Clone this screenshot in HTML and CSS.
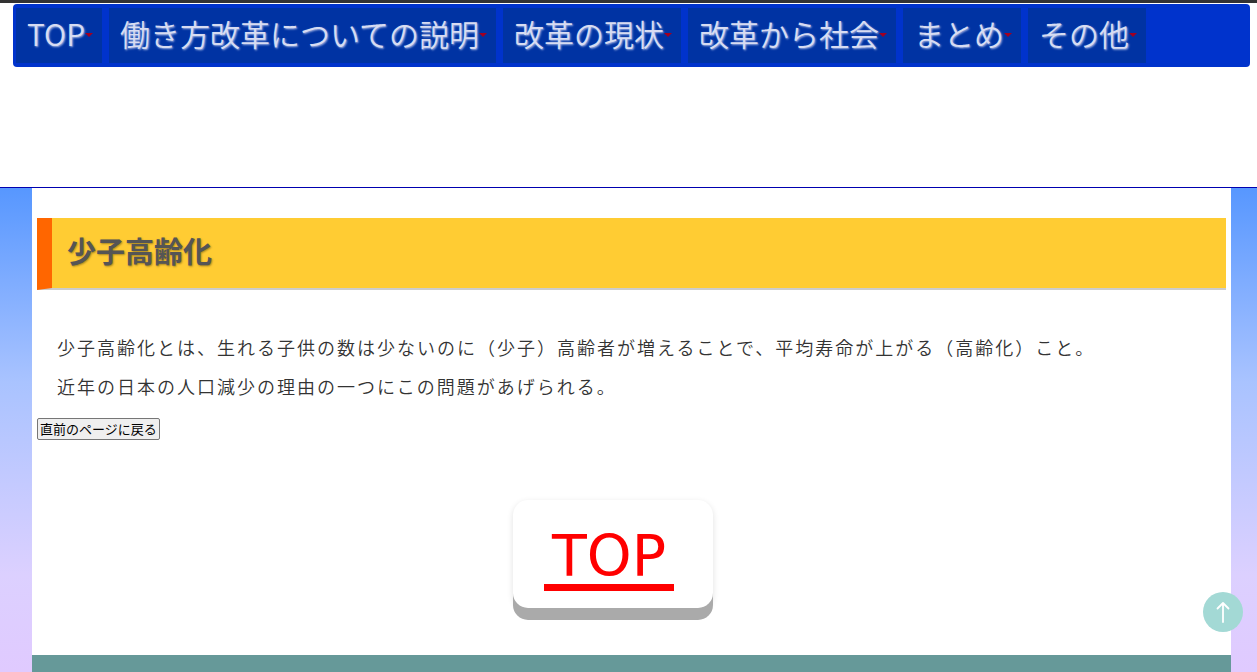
FILE: index.html
```html
<!DOCTYPE html>
<html lang="ja">
<head>
<meta charset="utf-8">
<title>少子高齢化</title>
<link rel="stylesheet" href="styles.css">
</head>
<body>
<header class="site-header">
  <nav class="gnav">
    <a class="gnav-item" href="#">TOP<span class="caret"></span></a>
    <a class="gnav-item" href="#">働き方改革についての説明<span class="caret"></span></a>
    <a class="gnav-item" href="#">改革の現状<span class="caret"></span></a>
    <a class="gnav-item" href="#">改革から社会<span class="caret"></span></a>
    <a class="gnav-item" href="#">まとめ<span class="caret"></span></a>
    <a class="gnav-item" href="#">その他<span class="caret"></span></a>
  </nav>
</header>
<div class="page">
  <main class="main">
    <h1 class="title">少子高齢化</h1>
    <div class="body-text">
      <p>少子高齢化とは、生れる子供の数は少ないのに（少子）高齢者が増えることで、平均寿命が上がる（高齢化）こと。</p>
      <p>近年の日本の人口減少の理由の一つにこの問題があげられる。</p>
    </div>
    <button class="back-btn" type="button">直前のページに戻る</button>
    <div class="top-wrap">
      <a class="top-card" href="#"><span class="top-link">TOP</span></a>
    </div>
  </main>
  <footer class="footer"></footer>
</div>
<a class="to-top" href="#" aria-label="ページ上部へ">
  <svg width="14" height="22" viewBox="0 0 14 22"><path d="M7 21V2M1.5 7.5L7 2l5.5 5.5" fill="none" stroke="#fff" stroke-width="1.8" stroke-linecap="round" stroke-linejoin="round"/></svg>
</a>
</body>
</html>
```

FILE: styles.css
```css
html, body {
  margin: 0;
  padding: 0;
}
body {
  font-family: "Noto Sans CJK JP", "Noto Sans", sans-serif;
  background: #fff;
  height: 672px;
  overflow: hidden;
}
.site-header {
  background: #fff;
  border-top: 3px solid #333;
  border-bottom: 1px solid #0000b0;
  height: 183px;
  padding: 1px 7px 0 13px;
  box-sizing: content-box;
}
.gnav {
  display: flex;
  gap: 7px;
  background: #0033cc;
  border-radius: 4px;
  padding: 4px 3px;
  height: 55px;
}
.gnav-item {
  display: flex;
  align-items: center;
  box-sizing: border-box;
  height: 55px;
  padding: 0 9px 5px 11px;
  background: #0033a3;
  color: #d7dcf2;
  text-decoration: none;
  font-size: 30px;
  font-weight: 350;
  line-height: 43px;
  text-shadow: 1px 1px 2px rgba(230, 235, 255, 0.7);
}
.caret {
  display: inline-block;
  width: 0;
  height: 0;
  border-left: 4px solid transparent;
  border-right: 4px solid transparent;
  border-top: 4px solid #a00022;
  margin-left: 0;
  margin-top: 4px;
}
.page {
  background: linear-gradient(to bottom, #5797ff 0%, #a9c3ff 40%, #dcd0ff 80%, #e0caff 100%);
  padding: 0 26px 0 32px;
  height: 484px;
  display: flex;
  flex-direction: column;
}
.main {
  background: #fff;
  flex: 1;
  padding: 30px 5px 0;
}
.title {
  margin: 0;
  box-sizing: border-box;
  padding: 0 0 6px 15px;
  background: #ffcc33;
  border-left: 15px solid #ff6600;
  border-bottom: 2px solid #cccccc;
  height: 72px;
  display: flex;
  align-items: center;
  font-size: 29px;
  font-weight: bold;
  color: #555;
  text-shadow: 1px 1px 2px rgba(0, 0, 0, 0.35);
}
.body-text {
  padding: 38px 0 0 20px;
}
.body-text p {
  margin: 0;
  font-size: 18px;
  font-weight: 350;
  letter-spacing: 2px;
  line-height: 39px;
  color: #333;
}
.back-btn {
  display: block;
  margin-top: 12px;
  height: 22px;
  padding: 0 2px;
  font-family: "Noto Sans CJK JP", sans-serif;
  font-size: 13px;
  line-height: 16px;
  color: #000;
  background: #efefef;
  border: 1px solid #767676;
  border-radius: 2px;
}
.top-wrap {
  padding: 60px 0 0 476px;
}
.top-card {
  display: flex;
  justify-content: center;
  align-items: flex-start;
  width: 200px;
  height: 108px;
  background: #fff;
  border-radius: 15px;
  box-shadow: 0 12px 0 #aaaaaa, 0 2px 6px rgba(0, 0, 0, 0.12);
  text-decoration: none;
}
.top-link {
  display: inline-block;
  margin-top: 29px;
  margin-left: -8px;
  padding: 0 8px 0 8px;
  font-family: "DejaVu Sans", sans-serif;
  font-size: 57px;
  line-height: 55px;
  color: #ff0000;
  border-bottom: 7px solid #ff0000;
}
.footer {
  height: 17px;
  background: #669999;
}
.to-top {
  position: fixed;
  right: 14px;
  bottom: 40px;
  width: 40px;
  height: 40px;
  border-radius: 50%;
  background: #a3d9d5;
  display: flex;
  align-items: center;
  justify-content: center;
}
```
